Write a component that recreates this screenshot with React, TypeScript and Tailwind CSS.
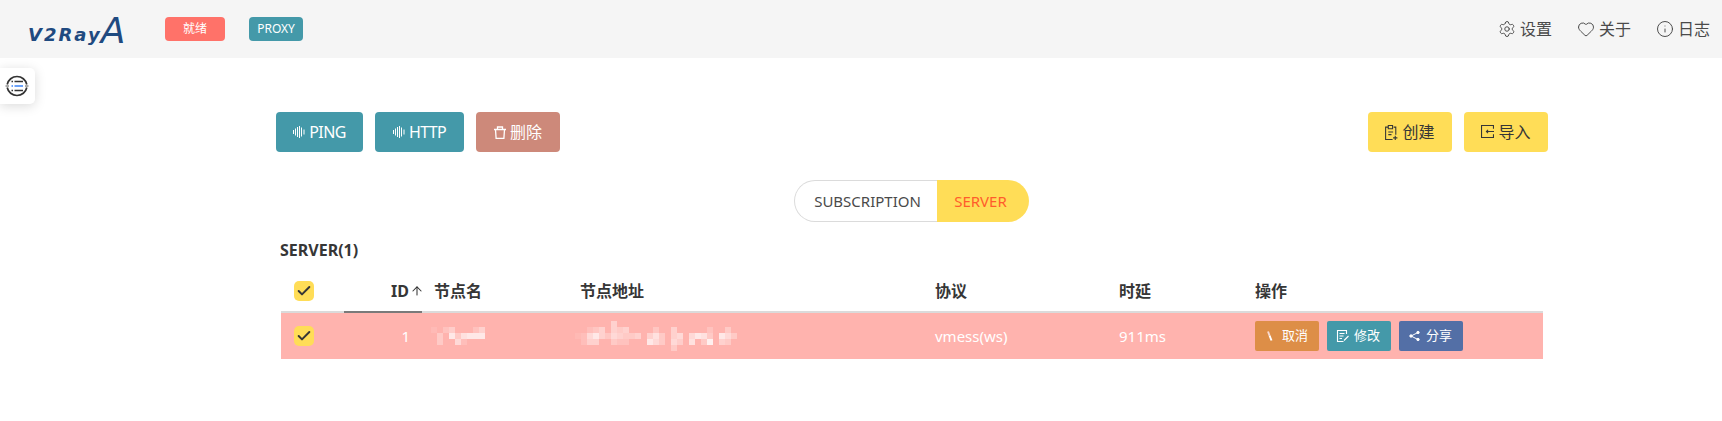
import { ArrowUp, Check, Heart, Info, Settings } from "lucide-react";

const sans = "font-['Noto_Sans','Noto_Sans_CJK_SC',sans-serif]";

function WaveIcon() {
  return (
    <svg viewBox="0 0 12 12" className="w-3 h-3" fill="none" stroke="currentColor" strokeWidth="1">
      <path d="M.5 4v4M2.5 2.5v7M4.5 1v10M6.5 0v12M8.5 1.5v9M11 3.5v5" />
    </svg>
  );
}

function TrashIcon() {
  return (
    <svg viewBox="0 0 12 13" className="w-3 h-[13px]" fill="none" stroke="currentColor" strokeWidth="1.3">
      <path d="M0 3.5h12M3.5 3.5V1h5v2.5M1.5 3.5l.6 8.8h7.8l.6-8.8" />
    </svg>
  );
}

function ClipboardIcon() {
  return (
    <svg viewBox="0 0 12 14" className="w-[13px] h-[15px]" fill="none" stroke="currentColor" strokeWidth="1">
      <path d="M7 13.5H.5V2h2M8 2h2v7M3 .5h4v3H3zM3 6.5h4.5M3 9h3M9.5 10v4M7.5 12h4" />
    </svg>
  );
}

function ImportIcon() {
  return (
    <svg viewBox="0 0 12 12" className="w-[13px] h-[13px] -mt-[2px]" fill="none" stroke="currentColor" strokeWidth="1">
      <path d="M11.5 8.5v3H.5V.5h11v3M12 6H5M6.5 4.5L5 6l1.5 1.5" />
    </svg>
  );
}

function WandIcon() {
  return (
    <svg viewBox="0 0 14 14" className="w-[14px] h-[14px]" fill="none" strokeWidth="2">
      <path d="M4 2.5L5.5 6.5" stroke="#f9d9d0" />
      <path d="M5.5 6.5L7.5 11.5" stroke="#ffffff" />
    </svg>
  );
}

function NoteIcon() {
  return (
    <svg viewBox="0 0 14 14" className="w-[14px] h-[14px]" fill="none" stroke="currentColor" strokeWidth="1">
      <path d="M10.5 5V1.5h-9v11h6M3.5 4.5h5M3.5 7h4M3.5 9.5h2.5M8 11.5l4.5-4.5" strokeWidth="1.1" />
    </svg>
  );
}

function ShareIcon() {
  return (
    <svg viewBox="0 0 14 14" className="w-[14px] h-[14px]" fill="currentColor" stroke="currentColor" strokeWidth="1">
      <circle cx="3" cy="7" r="1.2" />
      <circle cx="10" cy="3.5" r="1.2" />
      <circle cx="10" cy="10.5" r="1.2" />
      <path d="M3 7l7-3.5M3 7l7 3.5" fill="none" />
    </svg>
  );
}

function ServerListIcon() {
  return (
    <svg viewBox="0 0 24 24" className="w-6 h-6" fill="none">
      <path d="M2.2 10.5A10 10 0 0 1 21.8 10.5M21.8 13.5A10 10 0 0 1 2.2 13.5" stroke="#333" strokeWidth="1.7" />
      <path d="M0.5 12h3.5M20 12h3.5" stroke="#555" strokeWidth="1" />
      <path d="M6.5 7.5h1.5M9.5 7.5h8.5M6.5 16.5h1.5M9.5 16.5h8.5" stroke="#333" strokeWidth="1.4" />
      <path d="M6.5 12h1.5M9.5 12h8.5" stroke="#3b82f6" strokeWidth="1.6" />
    </svg>
  );
}

// mosaic blocks over the redacted node name / address, [col, row, alpha]
const nameBlocks = [
  [0, 0, 0.1], [2, 0, 0.2], [3, 0, 0.35], [7, 0, 0.2], [8, 0, 0.4],
  [1, 1, 0.3], [3, 1, 0.7], [4, 1, 0.3], [5, 1, 0.6], [6, 1, 0.7], [7, 1, 0.7], [8, 1, 0.7],
  [1, 2, 0.3], [4, 2, 0.5], [5, 2, 0.15],
];
const addrBlocks = [
  [6, 0, 0.4],
  [2, 1, 0.15], [3, 1, 0.25], [4, 1, 0.4], [6, 1, 0.4], [7, 1, 0.3], [8, 1, 0.4], [13, 1, 0.25], [16, 1, 0.4], [22, 1, 0.2], [25, 1, 0.3],
  [0, 2, 0.08], [1, 2, 0.15], [2, 2, 0.5], [3, 2, 0.7], [4, 2, 0.4], [5, 2, 0.25], [6, 2, 0.5], [7, 2, 0.4], [8, 2, 0.3], [9, 2, 0.3], [10, 2, 0.4], [12, 2, 0.4], [13, 2, 0.6], [14, 2, 0.3], [16, 2, 0.4], [17, 2, 0.5], [19, 2, 0.5], [20, 2, 0.7], [21, 2, 0.6], [22, 2, 0.3], [24, 2, 0.7], [25, 2, 0.5], [26, 2, 0.3],
  [1, 3, 0.15], [2, 3, 0.4], [3, 3, 0.4], [6, 3, 0.3], [7, 3, 0.2], [8, 3, 0.2], [12, 3, 0.7], [13, 3, 0.5], [14, 3, 0.3], [16, 3, 0.5], [17, 3, 0.35], [19, 3, 0.6], [21, 3, 0.3], [22, 3, 0.8], [24, 3, 0.4], [25, 3, 0.3],
  [16, 4, 0.3],
];

function Mosaic({ blocks, cols, rows, size }: { blocks: number[][]; cols: number; rows: number; size: number }) {
  return (
    <svg width={cols * size} height={rows * size} className="block">
      {blocks.map(([c, r, a]) => (
        <rect key={`${c}-${r}`} x={c * size} y={r * size} width={size} height={size} fill="#fff" fillOpacity={a} />
      ))}
    </svg>
  );
}

function RowCheck() {
  return (
    <span className="flex items-center justify-center w-5 h-5 rounded-[5px] bg-[#ffdd57]">
      <Check className="w-4 h-4 text-[#363636]" strokeWidth={3} />
    </span>
  );
}

function App() {
  return (
    <div className={`h-[421px] bg-white text-[#363636] overflow-hidden ${sans}`}>
      <nav className="h-[58px] bg-[#f5f5f5] flex items-center justify-between pl-7 pr-3">
        <div className="flex items-center">
          <div className="w-[95px] h-[40px] flex items-end text-[#1f4a80] font-['DejaVu_Sans',sans-serif] italic font-bold leading-none">
            <span className="text-[18px] tracking-[2px] pb-[5px] whitespace-nowrap">V2Ray</span>
            <span className="text-[36px] font-normal -ml-[1px]">A</span>
          </div>
          <span className="ml-[42px] w-[60px] h-6 rounded bg-[#ff7269] text-white text-[12px] flex items-center justify-center">就绪</span>
          <span className="ml-6 w-[54px] h-6 rounded bg-[#4499a9] text-white text-[12px] flex items-center justify-center">PROXY</span>
        </div>
        <div className="flex items-center gap-[25px] text-[16px] text-[#4a4a4a]">
          <a className="flex items-center gap-[4px]"><Settings className="w-[18px] h-[18px]" strokeWidth={1.3} />设置</a>
          <a className="flex items-center gap-[4px]"><Heart className="w-[18px] h-[18px]" strokeWidth={1.3} />关于</a>
          <a className="flex items-center gap-[4px]"><Info className="w-[18px] h-[18px]" strokeWidth={1.3} />日志</a>
        </div>
      </nav>

      <div className="absolute top-[68px] left-0 w-[35px] h-[36px] bg-white rounded-r-[5px] shadow-[0_2px_12px_rgba(0,0,0,0.15)] flex items-center justify-center pr-[1px]">
        <ServerListIcon />
      </div>

      <main className="ml-[276px] w-[1272px] pt-[54px]">
        <div className="flex justify-between">
          <div className="flex gap-3 text-white text-[16px]">
            <button className="w-[87px] h-10 rounded bg-[#4499a9] flex items-center justify-center gap-1 tracking-[-0.6px]"><WaveIcon />PING</button>
            <button className="w-[89px] h-10 rounded bg-[#4499a9] flex items-center justify-center gap-1 tracking-[-0.6px]"><WaveIcon />HTTP</button>
            <button className="w-[84px] h-10 rounded bg-[#cd897a] flex items-center justify-center gap-1"><TrashIcon />删除</button>
          </div>
          <div className="flex gap-3 text-[16px] text-[#363636]">
            <button className="w-[84px] h-10 rounded bg-[#ffdd57] flex items-center justify-center gap-1"><ClipboardIcon />创建</button>
            <button className="w-[84px] h-10 rounded bg-[#ffdd57] flex items-center justify-center gap-1"><ImportIcon />导入</button>
          </div>
        </div>

        <div className="mt-7 flex justify-center pr-[2px]">
          <div className="flex h-[42px] text-[15px]">
            <span className="w-[143px] border border-r-0 border-[#dbdbdb] rounded-l-full flex items-center justify-center text-[#4a4a4a] pl-[4px]">SUBSCRIPTION</span>
            <span className="w-[92px] bg-[#ffdd57] rounded-r-full flex items-center justify-center text-[#ff5c2b] pr-[4px]">SERVER</span>
          </div>
        </div>

        <div className="mt-[18px] pl-[4px] text-[16px] font-bold leading-5">SERVER(1)</div>

        <table className="ml-[5px] mt-[10px] w-[1262px] table-fixed border-collapse">
          <thead>
            <tr className="h-[42px] text-left text-[16px] font-bold">
              <th className="w-[63px] pl-[13px] border-b-2 border-[#dbdbdb]"><RowCheck /></th>
              <th className="w-[78px] border-b-2 border-[#7a7a7a]">
                <span className="flex items-center justify-end -mr-[2px]">ID<ArrowUp className="w-[14px] h-[14px] ml-[1px]" strokeWidth={1.8} /></span>
              </th>
              <th className="w-[158px] pl-3 border-b-2 border-[#dbdbdb]">节点名</th>
              <th className="w-[355px] border-b-2 border-[#dbdbdb]">节点地址</th>
              <th className="w-[184px] border-b-2 border-[#dbdbdb]">协议</th>
              <th className="w-[136px] border-b-2 border-[#dbdbdb]">时延</th>
              <th className="border-b-2 border-[#dbdbdb]">操作</th>
            </tr>
          </thead>
          <tbody>
            <tr className="h-[47px] bg-[#ffb3ae] text-white text-[15px]">
              <td className="pl-[13px]"><RowCheck /></td>
              <td className="text-right pr-[12px]">1</td>
              <td className="pl-[9px]"><Mosaic blocks={nameBlocks} cols={9} rows={3} size={6} /></td>
              <td><div className="-ml-[5px]"><Mosaic blocks={addrBlocks} cols={27} rows={5} size={6} /></div></td>
              <td>vmess(ws)</td>
              <td>911ms</td>
              <td>
                <div className="flex gap-2 text-[13px]">
                  <button className="w-16 h-[30px] rounded-[2px] bg-[#dd8e47] flex items-center gap-1 pl-[9px]"><WandIcon />取消</button>
                  <button className="w-16 h-[30px] rounded-[2px] bg-[#4499a9] flex items-center gap-1 pl-[9px]"><NoteIcon />修改</button>
                  <button className="w-16 h-[30px] rounded-[2px] bg-[#536fa6] flex items-center gap-1 pl-[9px]"><ShareIcon />分享</button>
                </div>
              </td>
            </tr>
          </tbody>
        </table>
      </main>
    </div>
  );
}

export default App;
